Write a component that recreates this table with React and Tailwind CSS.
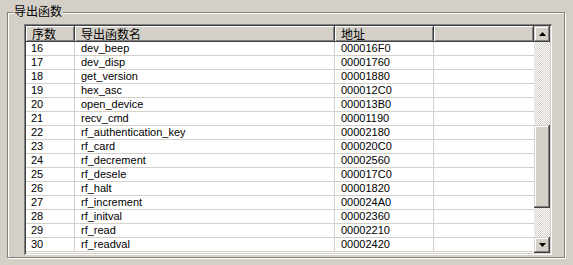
import React from 'react';

const rows = [
  ['16', 'dev_beep', '000016F0'],
  ['17', 'dev_disp', '00001760'],
  ['18', 'get_version', '00001880'],
  ['19', 'hex_asc', '000012C0'],
  ['20', 'open_device', '000013B0'],
  ['21', 'recv_cmd', '00001190'],
  ['22', 'rf_authentication_key', '00002180'],
  ['23', 'rf_card', '000020C0'],
  ['24', 'rf_decrement', '00002560'],
  ['25', 'rf_desele', '000017C0'],
  ['26', 'rf_halt', '00001820'],
  ['27', 'rf_increment', '000024A0'],
  ['28', 'rf_initval', '00002360'],
  ['29', 'rf_read', '00002210'],
  ['30', 'rf_readval', '00002420'],
];

const raised =
  'shadow-[inset_-1px_-1px_#404040,inset_1px_1px_#d4d0c8,inset_-2px_-2px_#808080,inset_2px_2px_#fff]';

function HeaderCell({ w, children }) {
  return (
    <div
      className={`${w} h-full shrink-0 pl-[6px] flex items-center bg-[#d4d0c8] shadow-[inset_-1px_-1px_#404040,inset_1px_1px_#fff,inset_-2px_-2px_#808080]`}
    >
      {children}
    </div>
  );
}

function Arrow({ up }) {
  return (
    <svg width="7" height="4" viewBox="0 0 7 4">
      {up ? <polygon points="3.5,0 7,4 0,4" fill="#000" /> : <polygon points="0,0 7,0 3.5,4" fill="#000" />}
    </svg>
  );
}

export default function App() {
  return (
    <div className="w-[573px] h-[265px] bg-[#d4d0c8] pt-[12px] pl-[7px] font-['Liberation_Sans','Noto_Sans_CJK_SC',sans-serif] text-[11px] text-black">
      <div className="relative w-[558px] h-[246px] border border-[#808080] shadow-[inset_1px_1px_#fff,1px_1px_#fff] pt-[11px] pl-[16px]">
        <div className="absolute left-[5px] top-[-10px] px-[1px] bg-[#d4d0c8] text-[12px] leading-[16px] font-['Noto_Sans_CJK_SC',sans-serif]">
          导出函数
        </div>

        <div className="w-[528px] h-[231px] p-[2px] bg-white shadow-[inset_1px_1px_#808080,inset_-1px_-1px_#fff,inset_2px_2px_#404040,inset_-2px_-2px_#d4d0c8] flex">
          <div className="w-[508px] flex flex-col overflow-hidden">
            <div className="h-[16px] flex shrink-0 font-['Noto_Sans_CJK_SC',sans-serif] text-[12px] leading-none">
              <HeaderCell w="w-[49px]">序数</HeaderCell>
              <HeaderCell w="w-[260px]">导出函数名</HeaderCell>
              <HeaderCell w="w-[99px]">地址</HeaderCell>
              <HeaderCell w="w-[100px]"></HeaderCell>
            </div>
            {rows.map(([n, name, addr]) => (
              <div key={n} className="h-[14px] flex shrink-0 border-b border-[#d4d0c8] leading-[13px]">
                <div className="w-[49px] shrink-0 pl-[5px] border-r border-[#d4d0c8]">{n}</div>
                <div className="w-[260px] shrink-0 pl-[6px] border-r border-[#d4d0c8]">{name}</div>
                <div className="w-[99px] shrink-0 pl-[6px] border-r border-[#d4d0c8]">{addr}</div>
                <div className="w-[100px] shrink-0"></div>
              </div>
            ))}
          </div>

          <div className="w-[16px] flex flex-col bg-[repeating-conic-gradient(#d4d0c8_0_25%,#fff_0_50%)] bg-[length:2px_2px]">
            <div className={`h-[16px] shrink-0 bg-[#d4d0c8] flex items-center justify-center ${raised}`}>
              <Arrow up />
            </div>
            <div className="h-[83px] shrink-0"></div>
            <div className={`h-[83px] shrink-0 bg-[#d4d0c8] ${raised}`}></div>
            <div className="flex-1"></div>
            <div className={`h-[16px] shrink-0 bg-[#d4d0c8] flex items-center justify-center ${raised}`}>
              <Arrow />
            </div>
          </div>
        </div>
      </div>
    </div>
  );
}
